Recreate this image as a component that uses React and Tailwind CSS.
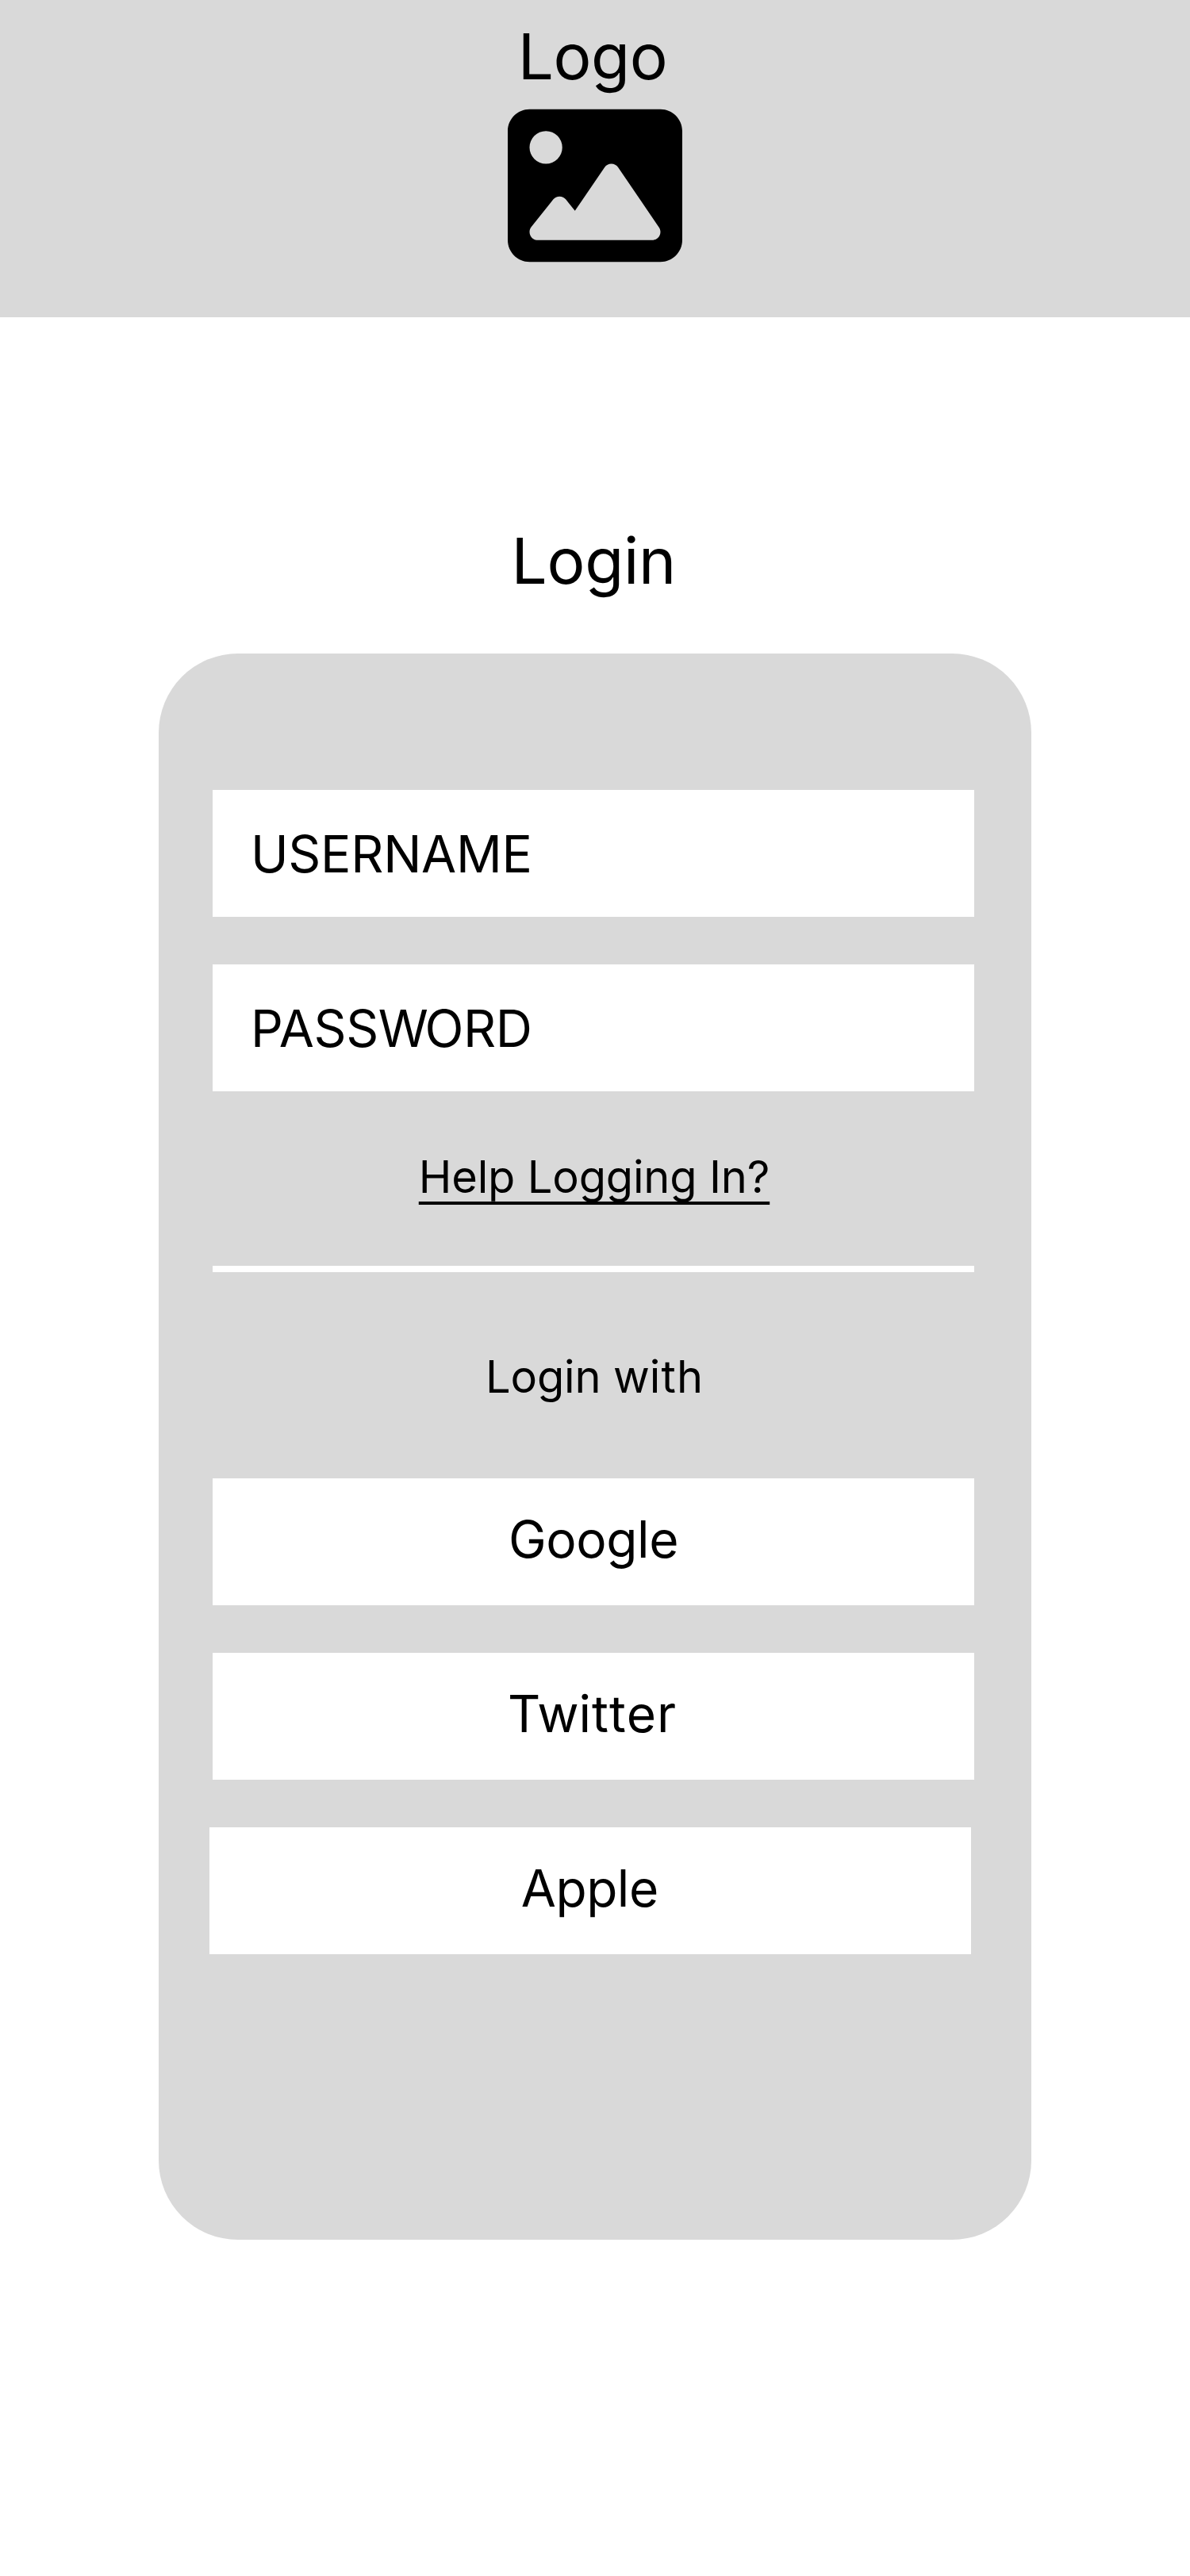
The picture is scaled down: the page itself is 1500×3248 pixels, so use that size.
import { FaImage } from "react-icons/fa6";

function Field({ children, className = "" }) {
  return (
    <div
      className={`flex h-[160px] w-full items-start bg-white pl-[48px] pt-[42px] text-[64px] leading-[77px] ${className}`}
    >
      <span>{children}</span>
    </div>
  );
}

function ProviderButton({ children, className = "" }) {
  return (
    <button
      type="button"
      className={`flex h-[160px] w-full items-start justify-center bg-white pt-[38px] text-[64px] leading-[77px] ${className}`}
    >
      <span>{children}</span>
    </button>
  );
}

export default function App() {
  return (
    <div className="flex h-[3248px] w-[1500px] flex-col items-center bg-white font-['Inter',sans-serif] text-black">
      <header className="flex h-[400px] w-full flex-col items-center bg-[#d9d9d9] pt-[22px]">
        <div className="pr-[6px] text-[80px] leading-[97px] tracking-[-0.4px]">Logo</div>
        <FaImage className="mt-[5px] h-[220px] w-[220px]" />
      </header>

      <h1 className="mt-[258px] pr-[3.5px] text-[80px] leading-[97px] tracking-[-0.25px]">Login</h1>

      <main className="mt-[69px] flex h-[2000px] w-[1100px] flex-col items-center rounded-[100px] bg-[#d9d9d9] pl-[68px] pr-[72px] pt-[172px]">
        <div className="flex w-full flex-col gap-[60px]">
          <Field className="tracking-[-0.3px]">USERNAME</Field>
          <Field className="tracking-[-0.4px]">
            PASS<span className="tracking-[-4.4px]">W</span>ORD
          </Field>
        </div>
        <a className="ml-[2px] mt-[74px] text-[56px] leading-[68px] tracking-[-0.18px] underline decoration-[4px] underline-offset-[11px] [text-decoration-skip-ink:none]">
          Help Logging In?
        </a>
        <div className="mt-[78px] h-[8px] w-full bg-white" />
        <div className="ml-[2px] mt-[98px] text-[56px] leading-[68px] tracking-[-0.13px]">
          Login w<span className="tracking-[1.2px]">it</span>h
        </div>
        <div className="mt-[94px] flex w-full flex-col gap-[60px]">
          <ProviderButton className="tracking-[-0.4px]">Google</ProviderButton>
          <ProviderButton className="pr-[3px]">
            Tw<span className="tracking-[0.95px] [font-kerning:none]">itter</span>
          </ProviderButton>
          <ProviderButton className="-ml-[4px] pr-[1.5px] tracking-[-0.45px]">Apple</ProviderButton>
        </div>
      </main>
    </div>
  );
}
